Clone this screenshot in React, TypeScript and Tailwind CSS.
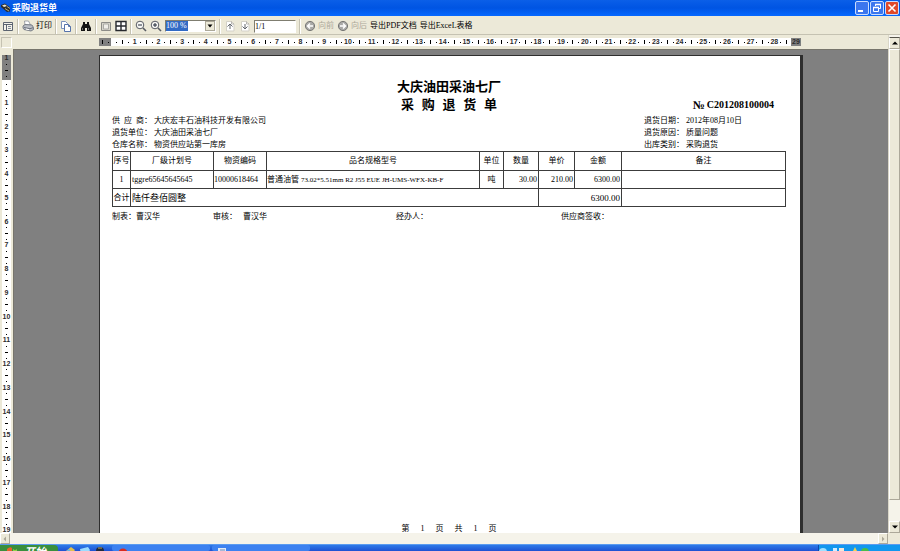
import type { ReactNode } from "react";

type IconProps = { children: ReactNode; className?: string };

function Icon({ children, className = "size-3" }: IconProps) {
  return (
    <svg
      aria-hidden="true"
      className={`shrink-0 ${className}`}
      fill="none"
      viewBox="0 0 12 12"
    >
      {children}
    </svg>
  );
}

function ToolButton({
  children,
  disabled = false,
  label,
}: {
  children: ReactNode;
  disabled?: boolean;
  label: string;
}) {
  return (
    <button
      aria-label={label}
      className="flex shrink-0 items-center gap-[2px] whitespace-nowrap disabled:text-[#aca899]"
      disabled={disabled}
      type="button"
    >
      {children}
    </button>
  );
}

function Separator() {
  return (
    <div className="h-[15px] w-[2px] shrink-0 border-l border-[#c5c2b2] bg-white" />
  );
}

function PanelIcon() {
  return (
    <Icon>
      <path d="M1.5 2.5h9v8h-9z" fill="#f4f2ea" stroke="#5c6470" />
      <path d="M2 4.5h8M4.5 5v5" stroke="#5c6470" />
      <path d="M6 6.5h3M6 8.5h3" stroke="#7f8894" />
    </Icon>
  );
}

function PrinterIcon() {
  return (
    <Icon>
      <path d="M3 5 2.500 1h4l2 4z" fill="#fff" stroke="#8a8f98" strokeWidth=".8" />
      <path d="M1 6 3 4.500l7 .5 1.500 2.500v2L9 11 2 9.500 1 8z" fill="#b9bdc4" stroke="#646b76" strokeWidth=".8" />
      <path d="m2 7.500 6 1.200 3-1" stroke="#555c68" strokeWidth=".8" />
      <path d="m4 9 3 .7" stroke="#fff" />
    </Icon>
  );
}

function CopyIcon() {
  return (
    <Icon>
      <path d="M1.500 1.500h4l2 2v5h-6z" fill="#fff" stroke="#7d93bd" />
      <path d="M4.500 4.500h4l2 2v5h-6z" fill="#fff" stroke="#5673ab" />
      <path d="M8.500 4.500v2h2" stroke="#5673ab" />
    </Icon>
  );
}

function FindIcon() {
  return (
    <Icon>
      <path
        d="M3 2h2v2h2V2h2v2l2 4v3H7V8H5v3H1V8l2-4z"
        fill="#141414"
      />
      <path d="M2.500 8v2M8.500 8v2" stroke="#8b8b8b" strokeWidth=".7" />
    </Icon>
  );
}

function SinglePageIcon() {
  return (
    <Icon>
      <path d="M1.500 2.500h9v8h-9z" fill="#d7d5cc" stroke="#8c8c88" />
      <path d="M3.500 4h5v5h-5z" fill="#efeee9" stroke="#a9a9a4" />
    </Icon>
  );
}

function MultiPageIcon() {
  return (
    <Icon>
      <path d="M1 1.500h10v9H1z" fill="#fff" stroke="#26292e" strokeWidth="1.400" />
      <path d="M6 2v8M1 6h10" stroke="#26292e" strokeWidth="1.400" />
    </Icon>
  );
}

function ZoomIcon({ plus = false }: { plus?: boolean }) {
  return (
    <Icon>
      <circle cx="5" cy="5" fill="#f7f7f4" r="3.800" stroke="#575b63" />
      <path d="m8 8 3 3" stroke="#575b63" strokeWidth="1.600" />
      <path d={plus ? "M3 5h4M5 3v4" : "M3 5h4"} stroke="#222a3a" />
    </Icon>
  );
}

function PageStepIcon({ down = false }: { down?: boolean }) {
  return (
    <Icon>
      <path d="M2.500 1.500h5l2.500 2.500v7h-7.500z" fill="#fff" stroke="#d3d1c7" />
      <path d="M7.500 1.500v2.500h2.500" stroke="#9b9a93" strokeWidth=".7" />
      <path
        d={down ? "M6 4v5M3.500 6.500 6 9l2.500-2.500" : "M6 9V4M3.500 6.500 6 4l2.500 2.500"}
        stroke="#62666d"
      />
    </Icon>
  );
}

function CircleArrowIcon({ right = false }: { right?: boolean }) {
  return (
    <Icon>
      <circle cx="6" cy="6" fill="#a9a9a7" r="4.600" stroke="#777775" />
      <path
        d={right ? "M3 6h5M6 3.500 8.500 6 6 8.500" : "M9 6H4M6 3.500 3.500 6 6 8.500"}
        stroke="#fff"
        strokeWidth="1.400"
      />
    </Icon>
  );
}

function TitleBar() {
  const frame =
    "flex size-[14px] items-center justify-center rounded-[2px] border border-[#c9dcff]";
  return (
    <header className="flex h-4 shrink-0 items-center justify-between bg-linear-to-b from-[#0b5fe8] via-[#0054e3] to-[#0668ff] pr-px">
      <div className="flex items-center">
        <Icon>
          <path d="m1 3 4-1.500 5 4v4L7 10 1 5z" fill="#2d2d2d" />
          <path d="m2 3.500 3-1 2 1.500-3 1z" fill="#e8e4cf" />
          <path d="m5 6.500 4 2.500M7 4.500l3 2" stroke="#d5c98e" strokeWidth=".8" />
        </Icon>
        <h1 className="text-[9px] font-bold text-white">采购退货单</h1>
      </div>
      <div className="flex gap-px">
        <button aria-label="最小化" className={`${frame} bg-[#3b76ee]`} type="button">
          <Icon>
            <path d="M2 9h5" stroke="#fff" strokeWidth="2" />
          </Icon>
        </button>
        <button aria-label="还原" className={`${frame} bg-[#3b76ee]`} type="button">
          <Icon>
            <path d="M4.500 4V2.500h5v4H8" stroke="#fff" />
            <path d="M2.500 5.500h5v4h-5z" stroke="#fff" />
            <path d="M2 5.500h6M4 2.500h6" stroke="#fff" strokeWidth="1.500" />
          </Icon>
        </button>
        <button aria-label="关闭" className={`${frame} bg-[#e0492a]`} type="button">
          <Icon>
            <path d="m2.500 2.500 7 7m0-7-7 7" stroke="#fff" strokeWidth="1.600" />
          </Icon>
        </button>
      </div>
    </header>
  );
}

function Toolbar() {
  return (
    <div
      className="flex h-[19px] shrink-0 items-center gap-[3px] border-b border-[#c5c2b2] bg-[#ece9d8] pt-[2px] pl-[2px]"
      role="toolbar"
    >
      <ToolButton label="属性"><PanelIcon /></ToolButton>
      <Separator />
      <ToolButton label="打印"><PrinterIcon />打印</ToolButton>
      <Separator />
      <ToolButton label="复制"><CopyIcon /></ToolButton>
      <Separator />
      <ToolButton label="查找"><FindIcon /></ToolButton>
      <Separator />
      <ToolButton label="单页"><SinglePageIcon /></ToolButton>
      <ToolButton label="多页"><MultiPageIcon /></ToolButton>
      <Separator />
      <ToolButton label="缩小"><ZoomIcon /></ToolButton>
      <ToolButton label="放大"><ZoomIcon plus /></ToolButton>
      <div className="relative flex h-3 w-[51px] shrink-0 border border-[#7f7d70] border-r-white border-b-white bg-white">
        <select
          aria-label="缩放比例"
          className="w-full appearance-none bg-[linear-gradient(90deg,#316ac5_22px,white_22px)] text-[8px] leading-[8px] text-white"
          defaultValue="100"
        >
          <option value="100">100 %</option>
          <option value="75">75 %</option>
          <option value="50">50 %</option>
        </select>
        <span className="pointer-events-none absolute inset-y-0 right-0 flex w-[10px] items-center justify-center border border-[#aca899] bg-[#ece9d8]">
          <Icon className="size-[6px]">
            <path d="M1 3h10L6 9z" fill="#000" />
          </Icon>
        </span>
      </div>
      <Separator />
      <ToolButton label="上一页"><PageStepIcon /></ToolButton>
      <ToolButton label="下一页"><PageStepIcon down /></ToolButton>
      <input
        aria-label="页码"
        className="h-[13px] w-[42px] shrink-0 border border-[#7f7d70] border-r-white border-b-white bg-white text-[8px] leading-[9px]"
        defaultValue="1/1"
        type="text"
      />
      <Separator />
      <ToolButton disabled label="向前"><CircleArrowIcon />向前</ToolButton>
      <ToolButton disabled label="向后"><CircleArrowIcon right />向后</ToolButton>
      <ToolButton label="导出PDF文档">导出PDF文档</ToolButton>
      <ToolButton label="导出ExceL表格">导出ExceL表格</ToolButton>
    </div>
  );
}

// Quarter-unit marks: dot, bar, dot, number.
function RulerMark({ index, vertical = false }: { index: number; vertical?: boolean }) {
  const step = index % 4;
  let mark: ReactNode = <i className="size-px bg-black" />;
  if (step === 0) {
    mark = <span>{index / 4}</span>;
  } else if (step === 2) {
    mark = <i className={vertical ? "h-px w-[3px] bg-black" : "h-[4px] w-px bg-black"} />;
  }
  return (
    <div className="flex min-h-0 min-w-0 flex-1 items-center justify-center">{mark}</div>
  );
}

function HorizontalRuler() {
  return (
    <div className="flex h-[14px] shrink-0 items-center">
      <div className="ml-px size-[11px] shrink-0 border border-[#c5c2b2] border-r-white border-b-white" />
      <div className="mx-auto flex h-2 w-full max-w-[702px] bg-white font-[Liberation_Sans] text-[7px] leading-[8px] font-bold text-[#2c2c2c]">
        <div className="flex w-3 shrink-0 items-center justify-around bg-[#808080]">
          <i className="h-[4px] w-px bg-black" />
          <i className="size-px bg-black" />
        </div>
        <div className="flex min-w-0 flex-1 pr-[2px] pl-[3px]">
          {Array.from({ length: 114 }, (_, index) => (
            <RulerMark index={index + 1} key={index} />
          ))}
        </div>
        <div className="flex w-[10px] shrink-0 justify-center bg-[#808080]">29</div>
      </div>
    </div>
  );
}

function VerticalRuler() {
  return (
    <div className="flex w-[13px] shrink-0 flex-col pt-[6px] pr-[2px] pl-[2px] font-[Liberation_Sans] text-[7px] leading-[6px] font-bold text-[#2c2c2c]">
      <div className="flex h-[25px] shrink-0 flex-col bg-[#808080]">
        <span className="text-center">1</span>
        {[1, 2, 3].map((index) => (
          <RulerMark index={index} key={index} vertical />
        ))}
      </div>
      <div className="flex min-h-0 flex-1 flex-col bg-white pt-[2px]">
        {Array.from({ length: 76 }, (_, index) => (
          <RulerMark index={index + 1} key={index} vertical />
        ))}
      </div>
    </div>
  );
}

function InfoLine({ label, value }: { label: string; value: string }) {
  return (
    <div className="flex">
      <dt className="w-[42px] whitespace-pre">{label}</dt>
      <dd>{value}</dd>
    </div>
  );
}

const cell = "border border-[#3c3c3c] p-0 whitespace-nowrap overflow-hidden";

function ReturnTable() {
  const headings = [
    "序号",
    "厂级计划号",
    "物资编码",
    "品名规格型号",
    "单位",
    "数量",
    "单价",
    "金额",
    "备注",
  ];
  return (
    <table className="w-full table-fixed">
      <colgroup>
        <col className="w-[18px]" />
        <col className="w-[83px]" />
        <col className="w-[53px]" />
        <col className="w-[213px]" />
        <col className="w-[24px]" />
        <col className="w-[35px]" />
        <col className="w-[36px]" />
        <col className="w-[47px]" />
        <col />
      </colgroup>
      <thead>
        <tr className="h-[19px]">
          {headings.map((heading) => (
            <th className={`${cell} text-center font-normal`} key={heading} scope="col">
              {heading}
            </th>
          ))}
        </tr>
      </thead>
      <tbody>
        <tr className="h-[18px]">
          <td className={`${cell} text-center`}>1</td>
          <td className={`${cell} pl-px`}>tggre65645645645</td>
          <td className={cell}>10000618464</td>
          <td className={cell}>
            普通油管{" "}
            <span className="text-[7px]">73.02*5.51mm R2 J55 EUE JH-UMS-WFX-KB-F</span>
          </td>
          <td className={`${cell} text-center`}>吨</td>
          <td className={`${cell} pr-px text-right`}>30.00</td>
          <td className={`${cell} pr-px text-right`}>210.00</td>
          <td className={`${cell} pr-px text-right`}>6300.00</td>
          <td className={cell} />
        </tr>
        <tr className="h-[18px]">
          <td className={`${cell} text-center`}>合计</td>
          <td className={`${cell} pl-px text-[9px]`} colSpan={5}>陆仟叁佰圆整</td>
          <td className={`${cell} pr-px text-right text-[9px]`} colSpan={2}>6300.00</td>
          <td className={cell} />
        </tr>
      </tbody>
    </table>
  );
}

function ReportPage() {
  return (
    <article className="mx-auto flex min-h-0 w-full max-w-[704px] flex-1 flex-col border-t border-r-[3px] border-l border-[#2e2e2e] bg-white pt-[22px] pr-[14px] pl-3 leading-[12px]">
      <div className="grid grid-cols-[1fr_auto_1fr] items-end">
        <h2 className="col-start-2 text-center text-[13px] leading-[18px] font-bold">
          大庆油田采油七厂
          <br />
          <span className="font-['Liberation_Mono','Noto_Sans_CJK_SC',monospace]">
            采 购 退 货 单
          </span>
        </h2>
        <p className="flex items-center justify-end gap-[2px] pr-3 pb-1 text-[10px] font-bold">
          <span className="text-[12px]">№</span>
          <span>C201208100004</span>
        </p>
      </div>
      <div className="flex justify-between">
        <dl>
          <InfoLine label="供  应  商：" value="大庆宏丰石油科技开发有限公司" />
          <InfoLine label="退货单位：" value="大庆油田采油七厂" />
          <InfoLine label="仓库名称：" value="物资供应站第一库房" />
        </dl>
        <dl className="w-[142px]">
          <InfoLine label="退货日期：" value="2012年08月10日" />
          <InfoLine label="退货原因：" value="质量问题" />
          <InfoLine label="出库类别：" value="采购退货" />
        </dl>
      </div>
      <ReturnTable />
      <div className="grid grid-cols-[101px_183px_165px_1fr] pt-1">
        <span>制表：曹汉华</span>
        <span className="flex gap-[6px]"><span>审核：</span><span>曹汉华</span></span>
        <span>经办人：</span>
        <span>供应商签收：</span>
      </div>
      <footer className="mt-auto flex justify-center gap-[11px] leading-[8px]">
        {["第", "1", "页", "共", "1", "页"].map((word, index) => (
          <span key={index}>{word}</span>
        ))}
      </footer>
    </article>
  );
}

const scrollButton =
  "flex shrink-0 items-center justify-center border border-white border-r-[#aca899] border-b-[#aca899] bg-[#ece9d8]";

function VerticalScrollbar() {
  return (
    <div className="flex w-3 shrink-0 flex-col border-l border-[#dad7c8] bg-[#f5f3ea] pt-[2px]">
      <button aria-label="向上滚动" className={`${scrollButton} h-3 border-t-[#55534a]`} type="button">
        <Icon className="size-[6px]"><path d="M0 9h12L6 3z" fill="#000" /></Icon>
      </button>
      <div className={`${scrollButton} flex-1`} />
      <div className="h-[21px] shrink-0" />
      <button aria-label="向下滚动" className={`${scrollButton} h-3`} type="button">
        <Icon className="size-[6px]"><path d="M0 3h12L6 9z" fill="#000" /></Icon>
      </button>
    </div>
  );
}

function HorizontalScrollbar() {
  return (
    <div className="flex h-[11px] shrink-0 bg-[#f5f3ea]">
      <button aria-label="向左滚动" className={`${scrollButton} w-[10px]`} type="button">
        <Icon className="size-[6px]"><path d="M8 1v10L3 6z" fill="#aca899" /></Icon>
      </button>
      <div className="flex-1" />
      <button aria-label="向右滚动" className={`${scrollButton} w-[10px]`} type="button">
        <Icon className="size-[6px]"><path d="M4 1v10l5-5z" fill="#aca899" /></Icon>
      </button>
      <div className="w-3 bg-[#ece9d8]" />
    </div>
  );
}

function Taskbar() {
  return (
    <nav className="flex h-[7px] shrink-0 overflow-hidden border-t border-[#5a9bf0] bg-linear-to-b from-[#2f7ae8] to-[#1f51d2]">
      <button
        className="flex w-[58px] shrink-0 gap-[6px] rounded-tr-[4px] bg-[#3a8f3c] pl-[6px] text-[11px] leading-[14px] font-bold text-white italic"
        type="button"
      >
        <Icon>
          <path d="M1 4q3-3 5-1v7H1z" fill="#e8632b" />
          <path d="M7 4q2 2 4 0v6H7z" fill="#8ed047" />
        </Icon>
        开始
      </button>
      <div className="flex w-[54px] shrink-0 justify-end gap-[3px] pr-[6px]">
        <Icon><path d="m2 6 5-4 4 3-4 5z" fill="#e2c04c" /><path d="m1 7 4-3 3 4z" fill="#64b6ea" /></Icon>
        <Icon><path d="m1 4 8-2 2 3-3 6-6-1z" fill="#9bdcff" /></Icon>
        <Icon><circle cx="6" cy="6" fill="#202a3c" r="4" /><path d="M4 3h4" stroke="#b9a45a" /></Icon>
      </div>
      <div className="mr-[2px] w-[98px] shrink-0 rounded-[2px] bg-[#3c81f0] pl-[5px]">
        <Icon><circle cx="6" cy="8" fill="#d92b20" r="4.500" /></Icon>
      </div>
      <div className="w-[98px] shrink-0 rounded-[2px] bg-[#3c81f0] pl-[5px]">
        <Icon><path d="M1 3h8v8H1z" fill="#dfe9f7" /><path d="M3 5h5" stroke="#6b88b8" /></Icon>
      </div>
      <div className="ml-auto flex w-[82px] shrink-0 gap-px border-l border-[#0b4ba8] bg-[#1297ee]">
        <Icon><circle cx="4" cy="7" fill="#9fe0ff" r="4" /></Icon>
        <Icon><path d="M1 3h4v8H1z" fill="#d3edff" /><path d="M7 3h5v8H7z" fill="#f6e6d8" /></Icon>
        <Icon><path d="m10 2 3 6H7z" fill="#f0d44a" /></Icon>
        <Icon><circle cx="7" cy="7" fill="#48bd48" r="4" /></Icon>
      </div>
    </nav>
  );
}

export default function App() {
  return (
    <div className="flex h-screen flex-col overflow-hidden bg-[#ece9d8] font-['Liberation_Serif','Noto_Sans_CJK_SC',serif] text-[8px] leading-[12px] text-black" lang="zh-CN">
      <TitleBar />
      <Toolbar />
      <div className="flex min-h-0 flex-1">
        <div className="flex min-w-0 flex-1 flex-col">
          <HorizontalRuler />
          <div className="flex min-h-0 flex-1">
            <VerticalRuler />
            <main className="flex min-h-0 min-w-0 flex-1 flex-col border-t border-l border-[#77756c] bg-[#808080] pt-[5px]">
              <ReportPage />
            </main>
          </div>
        </div>
        <VerticalScrollbar />
      </div>
      <HorizontalScrollbar />
      <Taskbar />
    </div>
  );
}
